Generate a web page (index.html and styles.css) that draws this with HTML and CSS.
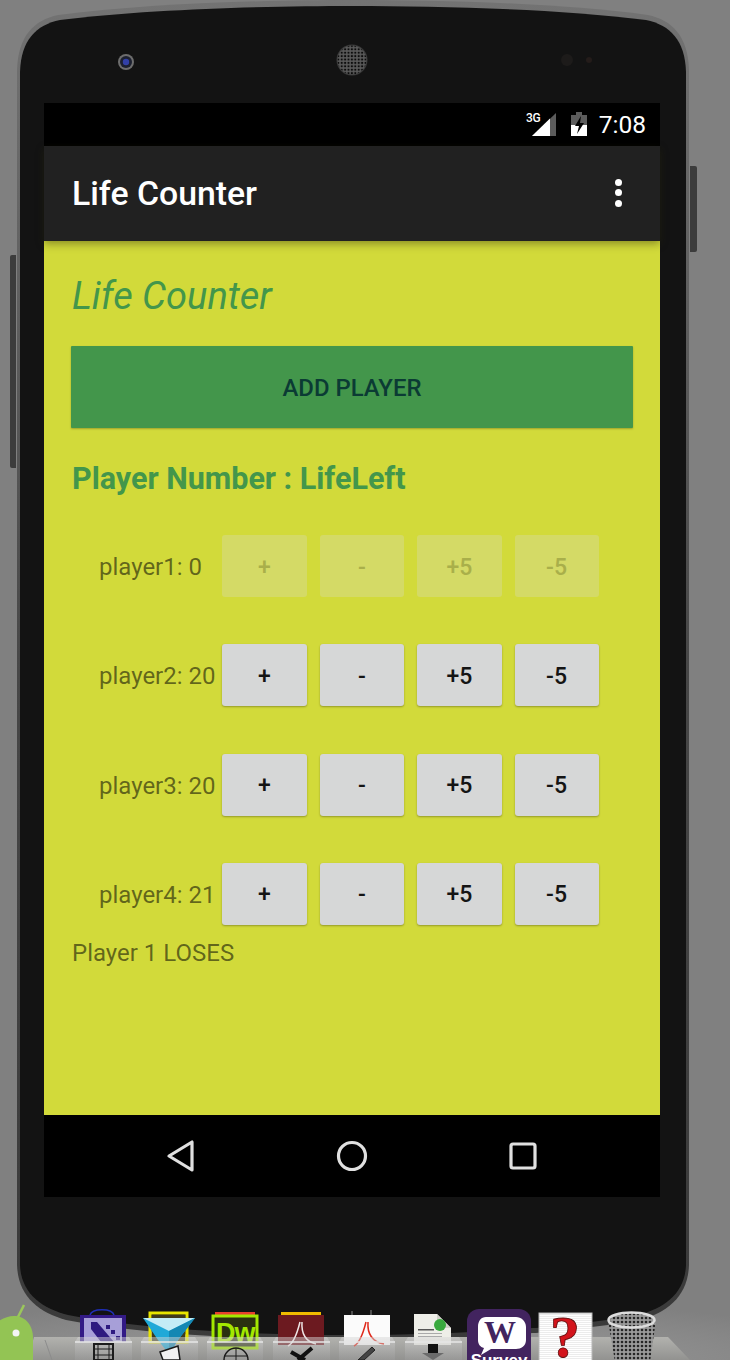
FILE: index.html
```html
<!DOCTYPE html>
<html lang="en">
<head>
<meta charset="utf-8">
<title>Life Counter</title>
<link rel="stylesheet" href="styles.css">
</head>
<body>
<div class="desktop">
  <svg class="canvas" width="730" height="1360" viewBox="0 0 730 1360" aria-hidden="true">
    <defs>
      <linearGradient id="rim" x1="0" y1="0" x2="0" y2="1">
        <stop offset="0" stop-color="#737373"/>
        <stop offset="0.5" stop-color="#474747"/>
        <stop offset="1" stop-color="#3a3a3a"/>
      </linearGradient>
      <radialGradient id="glow" cx="0.5" cy="1" r="0.7">
        <stop offset="0" stop-color="#a0a0a0"/>
        <stop offset="1" stop-color="#808080"/>
      </radialGradient>
      <pattern id="holes" width="3.4" height="3.4" patternUnits="userSpaceOnUse">
        <circle cx="1.7" cy="1.7" r="1.1" fill="#0c0c0c"/>
      </pattern>
    </defs>
    <rect x="0" y="1270" width="730" height="90" fill="url(#glow)"/>
    <path class="side" d="M690 166h5a2 2 0 0 1 2 2v82a2 2 0 0 1-2 2h-5z"/>
    <path class="side" d="M16 255h-4a2 2 0 0 0-2 2v209a2 2 0 0 0 2 2h4z"/>
    <path d="M17 70C18 36 34 20 58 15C150 3 270 0 352 0C440 0 560 3 648 15C672 20 688 36 689 70L689 1265C688 1296 668 1312 640 1320C560 1334 450 1340 352 1340C250 1340 140 1334 66 1320C38 1312 18 1296 17 1265Z" fill="url(#rim)"/>
    <path d="M20 72C21 40 36 25 60 20C150 9 270 6 352 6C440 6 560 9 646 20C670 25 685 40 686 72L686 1265C685 1293 665 1308 638 1315C560 1329 450 1335 352 1335C250 1335 140 1329 68 1315C41 1308 21 1293 20 1265Z" class="body"/>
    <circle cx="126" cy="62" r="8" fill="#6d6d6d"/>
    <circle cx="126" cy="62" r="6" fill="#1c2030"/>
    <circle cx="126" cy="62" r="3.2" fill="#3240a8"/>
    <circle cx="352" cy="60" r="15.5" fill="#3a3a3a"/>
    <circle cx="352" cy="60" r="14.5" fill="#5a5a5a"/>
    <circle cx="352" cy="60" r="14.5" fill="url(#holes)"/>
    <circle cx="567" cy="60" r="6" fill="#1d1b1a"/>
    <circle cx="589" cy="60" r="3" fill="#241c1a"/>
  </svg>

  <main class="screen">
    <header class="status">
      <span class="net">3G</span>
      <svg class="signal" width="30" height="24" viewBox="0 0 30 24" aria-hidden="true">
        <path d="M30 0V23H6z" fill="#5c5c5c"/>
        <path d="M24 5.500V23H6z" fill="#fff"/>
      </svg>
      <svg class="battery" width="16" height="24" viewBox="0 0 16 24" aria-hidden="true">
        <path d="M5 0h6v3h5v11H0V3h5z" fill="#5c5c5c"/>
        <path d="M0 13h16v11H0z" fill="#fff"/>
        <path d="M10 4L4 14h4l-2 8 7-11H9z" fill="#000"/>
      </svg>
      <span class="clock">7:08</span>
    </header>

    <nav class="appbar">
      <h1 class="app-title">Life Counter</h1>
      <span class="overflow"><i></i><i></i><i></i></span>
    </nav>

    <section class="content">
      <h2 class="page-title">Life Counter</h2>
      <button class="add">ADD PLAYER</button>
      <h3 class="legend">Player Number : LifeLeft</h3>
      <div class="players">
        <div class="player">
          <span class="name">player1: 0</span>
          <button class="life" disabled>+</button>
          <button class="life" disabled>-</button>
          <button class="life" disabled>+5</button>
          <button class="life" disabled>-5</button>
        </div>
        <div class="player">
          <span class="name">player2: 20</span>
          <button class="life">+</button>
          <button class="life">-</button>
          <button class="life">+5</button>
          <button class="life">-5</button>
        </div>
        <div class="player">
          <span class="name">player3: 20</span>
          <button class="life">+</button>
          <button class="life">-</button>
          <button class="life">+5</button>
          <button class="life">-5</button>
        </div>
        <div class="player">
          <span class="name">player4: 21</span>
          <button class="life">+</button>
          <button class="life">-</button>
          <button class="life">+5</button>
          <button class="life">-5</button>
        </div>
      </div>
      <p class="result">Player 1 LOSES</p>
    </section>

    <footer class="navbar">
      <svg width="30" height="34" viewBox="0 0 30 34" aria-hidden="true">
        <path class="navicon" d="M26 3V31L3 17Z"/>
      </svg>
      <svg width="32" height="32" viewBox="0 0 32 32" aria-hidden="true">
        <circle class="navicon" cx="16" cy="16" r="13.500"/>
      </svg>
      <svg width="30" height="30" viewBox="0 0 30 30" aria-hidden="true">
        <rect class="navicon" x="3" y="3" width="24" height="24" rx="2"/>
      </svg>
    </footer>
  </main>

  <svg class="dock" width="730" height="60" viewBox="0 1300 730 60">
    <defs>
      <linearGradient id="shelf" x1="0" y1="0" x2="0" y2="1">
        <stop offset="0" stop-color="#b2b2ae"/>
        <stop offset="1" stop-color="#929290"/>
      </linearGradient>
      <linearGradient id="tray" x1="0" y1="0" x2="0" y2="1">
        <stop offset="0" stop-color="#d8d8d8" stop-opacity=".5"/>
        <stop offset="1" stop-color="#a0a0a0" stop-opacity=".35"/>
      </linearGradient>
      <pattern id="mesh" width="4" height="4" patternUnits="userSpaceOnUse">
        <rect width="4" height="4" fill="#9a9a9a"/>
        <circle cx="2" cy="2" r="1.300" fill="#262626"/>
      </pattern>
      <pattern id="lines" width="2" height="2" patternUnits="userSpaceOnUse">
        <rect width="2" height="2" fill="#fff"/>
        <rect width="2" height="1" fill="#ececec"/>
      </pattern>
    </defs>
    <path d="M34 1337H668L690 1360H28Z" fill="url(#shelf)"/>
    <path d="M45 1340L52 1360" stroke="#8c8c8c" fill="none"/>

    <!-- android -->
    <path d="M16 1321L24 1305" stroke="#9bc75b" stroke-width="2.500"/>
    <path d="M-10 1360V1336C-10 1325 3 1316 14 1316C26 1316 33 1326 33 1338V1360Z" fill="#93c454"/>
    <circle cx="16" cy="1333" r="3.500" fill="#f4f4f4"/>

    <!-- video encoder -->
    <path d="M90 1315C92 1308 112 1308 114 1315" stroke="#1f2fb8" stroke-width="1.500" fill="none"/>
    <rect x="80" y="1315" width="46" height="27" fill="#331a86"/>
    <rect x="84" y="1318" width="38" height="24" fill="#a79fd8"/>
    <path d="M91 1322H97L114 1342H101L91 1329Z" fill="#2e1a80"/>
    <path d="M106 1325h4v4h-4zM111 1330h4v4h-4zM116 1336h4v4h-4z" fill="#2e1a80"/>
    <!-- bridge -->
    <rect x="150" y="1313" width="37" height="29" fill="none" stroke="#e7e400" stroke-width="3"/>
    <rect x="152" y="1315" width="33" height="26" fill="#3f3a1c"/>
    <path d="M143 1318H195L178 1340L169 1354L158 1340Z" fill="#1fa9d8"/>
    <path d="M143 1318H195L169 1331Z" fill="#c4ecf6"/>
    <path d="M169 1331L195 1318L178 1340L169 1354Z" fill="#1487b3"/>
    <!-- dreamweaver -->
    <rect x="215" y="1312" width="40" height="8" fill="#e8412e"/>
    <rect x="213" y="1316" width="44" height="32" fill="#2a3110" stroke="#a3e800" stroke-width="3"/>
    <text class="dw" x="216" y="1342">Dw</text>
    <!-- acrobat pro -->
    <rect x="281" y="1312" width="40" height="10" fill="#f0bb00"/>
    <rect x="278" y="1315" width="46" height="30" fill="#6c1a20"/>
    <path d="M300 1322C296 1338 292 1344 288 1346M302 1322C301 1336 308 1342 316 1344" stroke="#efe6e6" stroke-width="1.500" fill="none"/>
    <!-- acrobat reader -->
    <rect x="344" y="1315" width="46" height="30" fill="#fbfbfb"/>
    <path d="M352 1311v4M371 1310v5" stroke="#8a8a8a" stroke-width="1"/>
    <path d="M366 1322C362 1338 358 1344 354 1346M368 1322C367 1336 374 1342 384 1344" stroke="#e02a1c" stroke-width="1.500" fill="none"/>
    <!-- document -->
    <path d="M414 1314H437L451 1328V1345H414Z" fill="#eeeee8"/>
    <path d="M437 1314V1328H451Z" fill="#d0d0c8"/>
    <circle cx="440" cy="1325" r="6" fill="#39a93d"/>
    <rect x="418" y="1329" width="16" height="1.500" fill="#555"/>
    <rect x="418" y="1333" width="24" height="1" fill="#aaa"/>
    <rect x="418" y="1336" width="24" height="1" fill="#aaa"/>

    <!-- trays -->
    <g class="trays">
      <path d="M75 1342L78 1337H129L132 1342V1360H75Z"/>
      <path d="M141 1342L144 1337H195L198 1342V1360H141Z"/>
      <path d="M207 1342L210 1337H260L263 1342V1360H207Z"/>
      <path d="M273 1342L276 1337H327L330 1342V1360H273Z"/>
      <path d="M339 1342L342 1337H392L395 1342V1360H339Z"/>
      <path d="M405 1342L408 1337H459L462 1342V1360H405Z"/>
    </g>
    <path class="traylip" d="M75 1342H132M141 1342H198M207 1342H263M273 1342H330M339 1342H395M405 1342H462"/>
    <!-- tray contents -->
    <path d="M94 1344H113V1360H94Z" fill="none" stroke="#1c1c1c" stroke-width="2"/>
    <path d="M94 1349H113M94 1355H113M98 1344V1360M109 1344V1360" stroke="#1c1c1c" stroke-width="1"/>
    <path d="M160 1352L178 1346L180 1360H163Z" fill="#f2f2f2" stroke="#1a1a1a" stroke-width="1.500"/>
    <circle cx="236" cy="1360" r="12" fill="none" stroke="#1a1a1a" stroke-width="1.500"/>
    <path d="M224 1356H248M236 1348V1360" stroke="#1a1a1a"/>
    <path d="M291 1352L305 1360M312 1348L298 1360" stroke="#111" stroke-width="4"/>
    <path d="M358 1360L372 1347L375 1350L364 1360Z" fill="#444" stroke="#222"/>
    <rect x="428" y="1344" width="10" height="10" fill="#111"/>
    <path d="M422 1353H444L433 1360Z" fill="#6b6b6b"/>

    <!-- survey -->
    <rect x="467" y="1309" width="64" height="70" rx="12" fill="#42245f"/>
    <path d="M486 1317H516C521 1317 526 1321 526 1327V1340C526 1346 521 1349 516 1349H491L481 1355L484 1348C480 1347 478 1344 478 1340V1327C478 1321 481 1317 486 1317Z" fill="#fff"/>
    <text class="w" x="500" y="1343">W</text>
    <text class="survey" x="499" y="1366">Survey</text>
    <!-- help -->
    <rect x="539" y="1313" width="53" height="50" fill="url(#lines)" stroke="#b8b8b8"/>
    <text class="q" x="565" y="1357">?</text>
    <!-- trash -->
    <path d="M608 1320L615 1362H650L656 1320Z" fill="url(#mesh)"/>
    <ellipse cx="631.500" cy="1320" rx="23" ry="7.500" fill="url(#mesh)" stroke="#dcdcdc" stroke-width="2.500"/>
  </svg>
</div>
</body>
</html>
```

FILE: styles.css
```css
* {
  box-sizing: border-box;
}

html,
body {
  margin: 0;
  padding: 0;
}

body {
  width: 730px;
  height: 1360px;
  overflow: hidden;
  background: #808080;
  font-family: Roboto, "Liberation Sans", sans-serif;
}

.desktop {
  position: relative;
  width: 730px;
  height: 1360px;
  overflow: hidden;
  background: #808080;
}

.canvas {
  position: absolute;
  left: 0;
  top: 0;
}

.side {
  fill: #3c3c3c;
}

.body {
  fill: #131313;
}

.screen {
  position: absolute;
  left: 44px;
  top: 103px;
  width: 616px;
  height: 1094px;
  display: flex;
  flex-direction: column;
  background: #d2da3a;
}

.status {
  height: 43px;
  flex: none;
  display: flex;
  align-items: center;
  padding-right: 14px;
  background: #000;
  color: #fff;
  position: relative;
}

.net {
  position: absolute;
  left: 482px;
  top: 8px;
  font-size: 12px;
  font-weight: 500;
  line-height: 14px;
  letter-spacing: -0.3px;
}

.signal {
  position: absolute;
  left: 482px;
  top: 10px;
}

.battery {
  position: absolute;
  left: 527px;
  top: 9px;
}

.clock {
  margin-left: auto;
  font-size: 24.500px;
  font-weight: 400;
  line-height: 43px;
}

.appbar {
  height: 95px;
  flex: none;
  display: flex;
  align-items: center;
  justify-content: space-between;
  padding: 0 38px 0 28px;
  background: #212121;
  position: relative;
  z-index: 1;
  box-shadow: 0 3px 8px rgba(40, 40, 10, 0.42);
}

.app-title {
  margin: 0;
  color: #fff;
  font-size: 33.800px;
  font-weight: 500;
  line-height: 100px;
}

.overflow {
  display: flex;
  flex-direction: column;
  gap: 3.500px;
  margin-top: -2px;
}

.overflow i {
  display: block;
  width: 7px;
  height: 7px;
  border-radius: 50%;
  background: #fff;
}

.content {
  flex: 1;
  padding: 0 27px 0 28px;
  background: #d2da3a;
}

.page-title {
  margin: 35px 0 29px;
  height: 41px;
  color: #43964b;
  font-size: 38px;
  font-style: italic;
  font-weight: 400;
  line-height: 41px;
}

.add {
  display: block;
  width: 562px;
  height: 82px;
  margin: 0 0 0 -1px;
  padding: 2px 0 0;
  border: 0;
  border-radius: 1px;
  background: #43964b;
  color: #0b3b34;
  font-family: inherit;
  font-size: 23.900px;
  font-weight: 500;
  box-shadow: 0 1px 2px rgba(0, 0, 0, 0.25);
}

.legend {
  margin: 34px 0 39px;
  height: 34px;
  color: #43964b;
  font-size: 30.500px;
  font-weight: 700;
  line-height: 34px;
}

.players {
  display: flex;
  flex-direction: column;
  gap: 47.300px;
}

.player {
  height: 62px;
  display: grid;
  grid-template-columns: 85px 84.500px 85px 84px;
  column-gap: 12.700px;
  padding-left: 150px;
  position: relative;
  align-items: stretch;
}

.name {
  position: absolute;
  left: 27px;
  top: 0;
  color: rgba(0, 0, 0, 0.55);
  font-size: 24px;
  line-height: 64px;
}

.life {
  margin: 0;
  padding: 2px 0 0;
  border: 0;
  border-radius: 3px;
  background: #d6d7d7;
  color: #141414;
  font-family: inherit;
  font-size: 23px;
  font-weight: 500;
  box-shadow: 0 1px 2px rgba(0, 0, 0, 0.3);
}

.life:disabled {
  background: #d4da66;
  color: #a9af4a;
  box-shadow: none;
}

.result {
  margin: 12px 0 0;
  color: rgba(0, 0, 0, 0.55);
  font-size: 24px;
  line-height: 32px;
}

.navbar {
  height: 82px;
  flex: none;
  display: flex;
  align-items: center;
  background: #000;
  padding-left: 122px;
  gap: 140px;
}

.navicon {
  fill: none;
  stroke: #e0e0e0;
  stroke-width: 3.200;
  stroke-linejoin: round;
}

.dock {
  position: absolute;
  left: 0;
  top: 1300px;
}

.trays path {
  fill: url(#tray);
}

.traylip {
  fill: none;
  stroke: #e6e6e6;
  stroke-width: 1.500;
}

.dw {
  fill: #a3e800;
  font-family: "Liberation Sans", sans-serif;
  font-size: 27px;
  font-weight: 700;
  letter-spacing: -1px;
}

.w {
  fill: #42245f;
  font-family: "Liberation Serif", serif;
  font-size: 32px;
  font-weight: 700;
  text-anchor: middle;
}

.survey {
  fill: #fff;
  font-family: "Liberation Sans", sans-serif;
  font-size: 17px;
  font-weight: 700;
  text-anchor: middle;
}

.q {
  fill: #d3141c;
  stroke: #5c0a0a;
  stroke-width: 0.800;
  font-family: "Liberation Serif", serif;
  font-size: 60px;
  font-weight: 700;
  text-anchor: middle;
}
```
